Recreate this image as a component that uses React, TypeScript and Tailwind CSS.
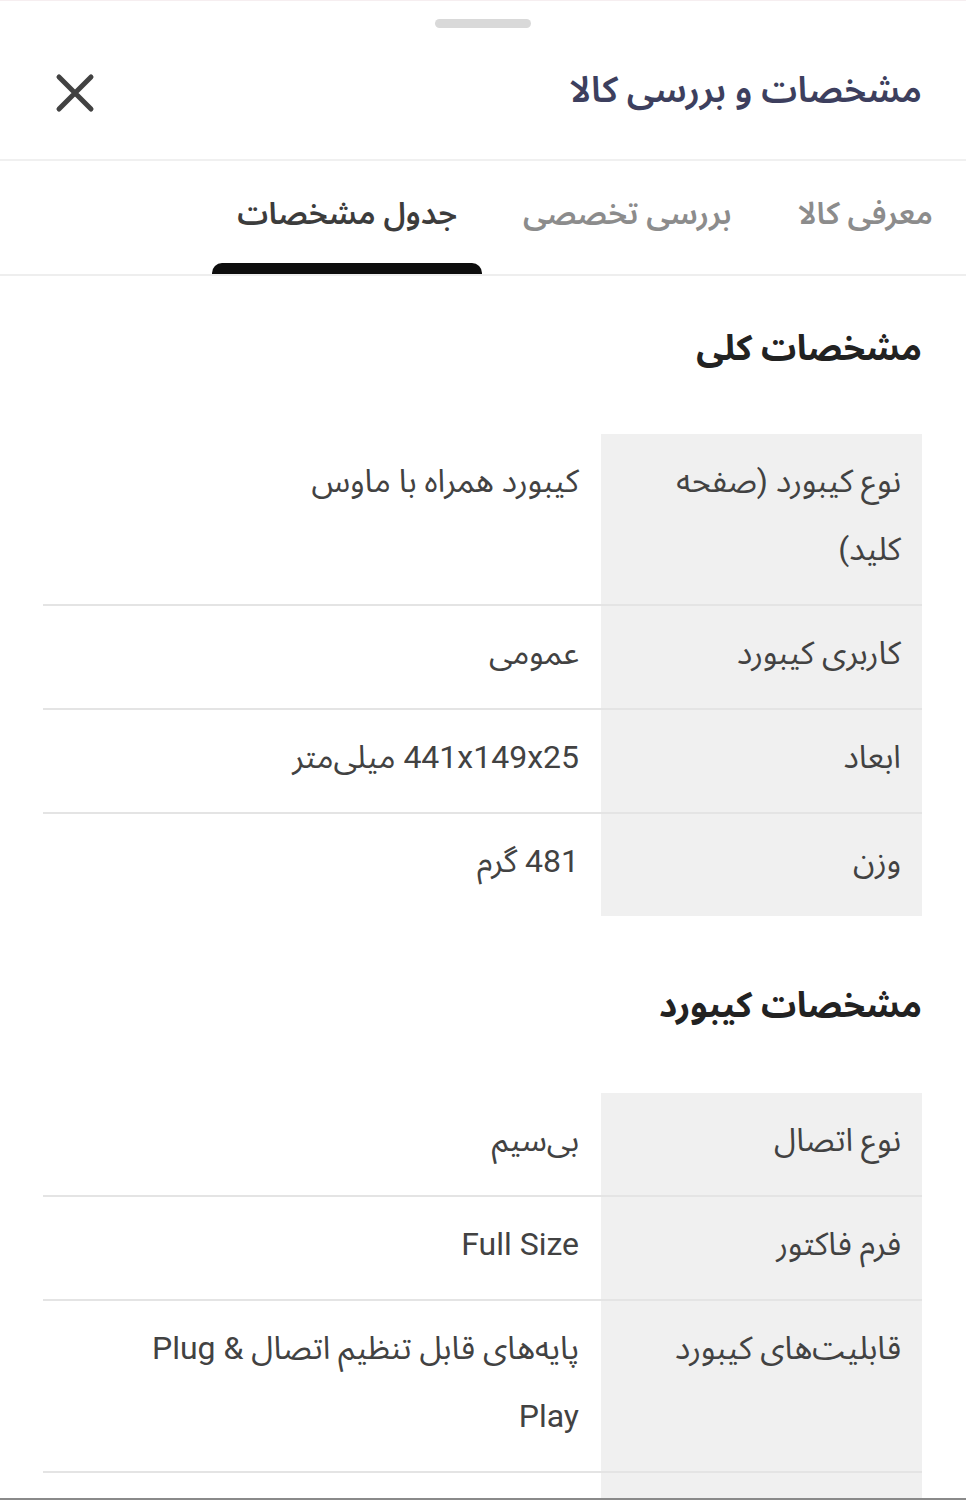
import React from "react";

type Row = { k: React.ReactNode; v: React.ReactNode };

const general: Row[] = [
  { k: "نوع کیبورد (صفحه کلید)", v: "کیبورد همراه با ماوس" },
  { k: "کاربری کیبورد", v: "عمومی" },
  { k: "ابعاد", v: "441x149x25 میلی‌متر" },
  { k: "وزن", v: "481 گرم" },
];

const keyboard: Row[] = [
  { k: "نوع اتصال", v: "بی‌سیم" },
  { k: "فرم فاکتور", v: "Full Size" },
  {
    k: "قابلیت‌های کیبورد",
    v: (
      <>
        {"پایه‌های قابل تنظیم اتصال Plug &\u200E"}
        <br />
        Play
      </>
    ),
  },
  { k: "", v: "" },
];

function SpecTable({ rows }: { rows: Row[] }) {
  return (
    <div className="ml-[43px] mr-[44px]">
      {rows.map((r, i) => (
        <div
          key={i}
          className={
            "grid grid-cols-[321px_1fr] " +
            (i < rows.length - 1 ? "border-b-2 border-[#e4e4e4]" : "")
          }
        >
          <div className="bg-[#f0f0f0] px-[21px] pt-[13px] pb-[21px] text-[32px] leading-[68px] text-[#424242] min-h-[102px]">
            {r.k}
          </div>
          <div className="px-[22px] pt-[13px] pb-[21px] text-[32px] leading-[68px] text-[#424242] min-h-[102px]">
            {r.v}
          </div>
        </div>
      ))}
    </div>
  );
}

export default function App() {
  return (
    <div
      dir="rtl"
      className="w-[966px] h-[1500px] flex flex-col overflow-hidden bg-white border-t border-[#f6eef0] font-['Roboto','Noto_Sans_Arabic','DejaVu_Sans',sans-serif]"
    >
      <div className="flex-1 overflow-hidden">
        <div className="flex justify-center pt-[18px]">
          <div className="w-[96px] h-[9px] rounded-full bg-[#d9d9d9]" />
        </div>
        <div className="flex items-center justify-between h-[133px] pr-[44px] pl-[55px] border-b-2 border-[#f0f0f0]">
          <div className="text-[36px] font-semibold text-[#3d3f5e] pb-[8px]">مشخصات و بررسی کالا</div>
          <svg width="40" height="40" viewBox="0 0 40 40" className="mb-[2px]">
            <path d="M4 4 L36 36 M36 4 L4 36" stroke="#424242" strokeWidth="5" strokeLinecap="round" />
          </svg>
        </div>
        <div className="flex h-[115px] pr-[8px] gap-[16px] border-b-2 border-[#eeeeee]">
          <div className="relative flex items-center px-[25px] pb-[6px] text-[31px] font-semibold text-[#8c8c8c]">
            معرفی کالا
          </div>
          <div className="relative flex items-center px-[25px] pb-[6px] text-[31px] font-semibold text-[#8c8c8c]">
            بررسی تخصصی
          </div>
          <div className="relative flex items-center px-[25px] pb-[6px] text-[31px] font-semibold text-[#3c3c3c]">
            جدول مشخصات
            <div className="absolute left-0 right-0 bottom-0 h-[11px] rounded-t-[10px] bg-[#0d0d0d]" />
          </div>
        </div>

        <div className="pr-[44px] pt-[43px] pb-[55px] text-[35px] font-bold text-[#222222] leading-[60px]">
          مشخصات کلی
        </div>
        <SpecTable rows={general} />

        <div className="pr-[44px] pt-[60px] pb-[57px] text-[35px] font-bold text-[#222222] leading-[60px]">
          مشخصات کیبورد
        </div>
        <SpecTable rows={keyboard} />
      </div>
      <div className="h-[2px] bg-[#8a8a8a]" />
    </div>
  );
}
